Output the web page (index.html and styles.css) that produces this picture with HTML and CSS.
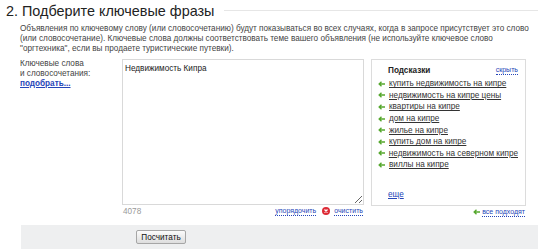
FILE: index.html
```html
<!DOCTYPE html>
<html lang="ru">
<head>
    <meta charset="UTF-8">
    <title>Ключевые фразы</title>
    <link rel="stylesheet" href="styles.css">
</head>
<body>
    <div class="step">
        <div class="step-title">
            <h2>2. Подберите ключевые фразы</h2>
            <div class="title-line"></div>
        </div>
        <p class="step-hint">Объявления по ключевому слову (или словосочетанию) будут показываться во всех случаях, когда в запросе присутствует это слово (или словосочетание). Ключевые слова должны соответствовать теме вашего объявления (не используйте ключевое слово "оргтехника", если вы продаете туристические путевки).</p>

        <div class="phrases">
            <div class="phrases-label">
                Ключевые слова<br>и словосочетания:<br>
                <a href="#" class="pick-link">подобрать...</a>
            </div>

            <div class="phrases-input">
                <textarea class="phrases-text">Недвижимость Кипра</textarea>
                <div class="input-footer">
                    <span class="counter">4078</span>
                    <a href="#" class="dotted">упорядочить</a>
                    <span class="clear-icon">
                        <svg width="8" height="8" viewBox="0 0 8 8">
                            <circle cx="4" cy="4" r="4" fill="#dd2b36"/>
                            <path d="M2.5 2.5 L5.5 5.5 M5.5 2.5 L2.5 5.5" stroke="#fff" stroke-width="1.3"/>
                        </svg>
                    </span>
                    <a href="#" class="dotted">очистить</a>
                </div>
            </div>

            <div class="hints">
                <div class="hints-box">
                    <div class="hints-head">
                        <b>Подсказки</b>
                        <a href="#" class="dotted">скрыть</a>
                    </div>
                    <ul class="hints-list">
                        <li><span class="arrow"><svg width="7" height="6" viewBox="0 0 7 6"><path d="M7 3 H1.5 M3.5 0.8 L1.2 3 L3.5 5.2" fill="none" stroke="#56a82e" stroke-width="1.4"/></svg></span><a href="#">купить недвижимость на кипре</a></li>
                        <li><span class="arrow"><svg width="7" height="6" viewBox="0 0 7 6"><path d="M7 3 H1.5 M3.5 0.8 L1.2 3 L3.5 5.2" fill="none" stroke="#56a82e" stroke-width="1.4"/></svg></span><a href="#">недвижимость на кипре цены</a></li>
                        <li><span class="arrow"><svg width="7" height="6" viewBox="0 0 7 6"><path d="M7 3 H1.5 M3.5 0.8 L1.2 3 L3.5 5.2" fill="none" stroke="#56a82e" stroke-width="1.4"/></svg></span><a href="#">квартиры на кипре</a></li>
                        <li><span class="arrow"><svg width="7" height="6" viewBox="0 0 7 6"><path d="M7 3 H1.5 M3.5 0.8 L1.2 3 L3.5 5.2" fill="none" stroke="#56a82e" stroke-width="1.4"/></svg></span><a href="#">дом на кипре</a></li>
                        <li><span class="arrow"><svg width="7" height="6" viewBox="0 0 7 6"><path d="M7 3 H1.5 M3.5 0.8 L1.2 3 L3.5 5.2" fill="none" stroke="#56a82e" stroke-width="1.4"/></svg></span><a href="#">жилье на кипре</a></li>
                        <li><span class="arrow"><svg width="7" height="6" viewBox="0 0 7 6"><path d="M7 3 H1.5 M3.5 0.8 L1.2 3 L3.5 5.2" fill="none" stroke="#56a82e" stroke-width="1.4"/></svg></span><a href="#">купить дом на кипре</a></li>
                        <li><span class="arrow"><svg width="7" height="6" viewBox="0 0 7 6"><path d="M7 3 H1.5 M3.5 0.8 L1.2 3 L3.5 5.2" fill="none" stroke="#56a82e" stroke-width="1.4"/></svg></span><a href="#">недвижимость на северном кипре</a></li>
                        <li><span class="arrow"><svg width="7" height="6" viewBox="0 0 7 6"><path d="M7 3 H1.5 M3.5 0.8 L1.2 3 L3.5 5.2" fill="none" stroke="#56a82e" stroke-width="1.4"/></svg></span><a href="#">виллы на кипре</a></li>
                    </ul>
                    <a href="#" class="more-link">еще</a>
                </div>
                <div class="hints-footer">
                    <span class="arrow"><svg width="7" height="6" viewBox="0 0 7 6"><path d="M7 3 H1.5 M3.5 0.8 L1.2 3 L3.5 5.2" fill="none" stroke="#56a82e" stroke-width="1.4"/></svg></span>
                    <a href="#" class="dotted">все подходят</a>
                </div>
            </div>
        </div>

        <div class="submit-bar">
            <button class="calc-btn">Посчитать</button>
        </div>
    </div>
</body>
</html>
```

FILE: styles.css
```css
body {
    margin: 0;
    font-family: "Liberation Sans", Arial, sans-serif;
    font-size: 8.2px;
    color: #444;
    background-color: #fff;
}

a {
    color: #2545b8;
}

.step-title {
    display: flex;
    align-items: center;
    height: 20px;
    padding: 2px 0 0 6px;
    box-sizing: border-box;
}

.step-title h2 {
    margin: 0;
    font-size: 14.4px;
    line-height: 18px;
    font-weight: normal;
    color: #222;
    white-space: nowrap;
}

.title-line {
    flex: 1;
    margin: 0 0 2px 10px;
    border-top: 1px solid #e6e6e6;
}

.step-hint {
    margin: 4px 6px 0 20px;
    line-height: 10px;
}

.phrases {
    display: flex;
    margin: 5px 0 0 20px;
}

.phrases-label {
    width: 102px;
    line-height: 10px;
}

.pick-link {
    font-weight: bold;
}

.phrases-input {
    width: 242px;
}

.phrases-text {
    display: block;
    box-sizing: border-box;
    width: 242px;
    height: 146px;
    margin: 0;
    padding: 4px 2px;
    border: 1px solid #d9d9d9;
    font-family: "Liberation Sans", Arial, sans-serif;
    font-size: 8.2px;
    color: #222;
    resize: both;
}

.input-footer {
    display: flex;
    align-items: center;
    height: 12px;
    padding-right: 1px;
}

.counter {
    flex: 1;
    padding-left: 1px;
    color: #999;
}

.dotted {
    text-decoration: none;
    border-bottom: 1px dotted #2545b8;
    font-size: 7px;
    line-height: 8px;
}

.clear-icon {
    display: flex;
    margin: 0 4px 0 6px;
}

.hints {
    width: 155px;
    margin-left: 7px;
}

.hints-box {
    box-sizing: border-box;
    height: 147px;
    padding: 5px 7px 0 5px;
    border: 1px solid #dcdcdc;
}

.hints-head {
    display: flex;
    justify-content: space-between;
    align-items: center;
    height: 10px;
    padding-left: 11px;
    color: #222;
}

.hints-list {
    list-style: none;
    margin: 3px 0 0 0;
    padding: 0;
}

.hints-list li {
    display: flex;
    align-items: center;
    height: 11.6px;
    white-space: nowrap;
}

.hints-list a {
    color: #333;
    text-decoration: underline;
}

.arrow {
    display: flex;
    width: 11px;
    padding-left: 1px;
}

.more-link {
    display: inline-block;
    margin: 19px 0 0 11px;
    line-height: 10px;
}

.hints-footer {
    display: flex;
    justify-content: flex-end;
    align-items: center;
    height: 12px;
    padding-right: 1px;
}

.hints-footer .arrow {
    width: 9px;
}

.submit-bar {
    height: 25px;
    margin: 7px 0 0 21px;
    padding: 5px 0 0 115px;
    background-color: #eeeff0;
}

.calc-btn {
    height: 14px;
    width: 50px;
    padding: 0;
    border: 1px solid #a6a6a6;
    border-radius: 2px;
    background: linear-gradient(#fbfbfb, #dddddd);
    font-family: "Liberation Sans", Arial, sans-serif;
    font-size: 8.2px;
    color: #111;
}
```
